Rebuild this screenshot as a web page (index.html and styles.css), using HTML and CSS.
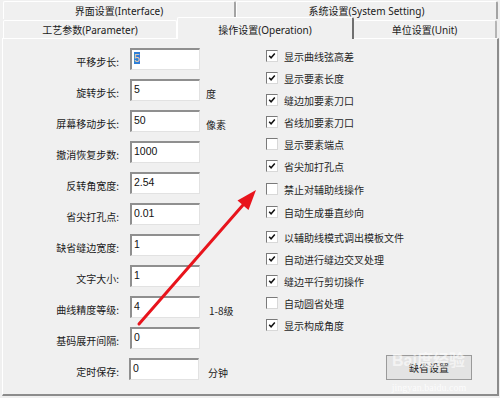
FILE: index.html
```html
<!DOCTYPE html>
<html lang="zh">

<head>
    <meta charset="UTF-8">
    <title>操作设置</title>
    <link rel="stylesheet" href="styles.css">
</head>

<body>
    <div class="window">
        <div class="tab-row top">
            <div class="tab wide">界面设置(Interface)</div>
            <div class="tab wide last">系统设置(System Setting)</div>
        </div>
        <div class="tab-row second">
            <div class="tab param">工艺参数(Parameter)</div>
            <div class="tab oper active">操作设置(Operation)</div>
            <div class="tab unit last">单位设置(Unit)</div>
        </div>

        <div class="panel">
            <div class="fields">
                <div class="row"><span class="label">平移步长:</span><div class="field"><span class="sel">5</span></div></div>
                <div class="row"><span class="label">旋转步长:</span><div class="field">5</div><span class="unit-text">度</span></div>
                <div class="row"><span class="label">屏幕移动步长:</span><div class="field">50</div><span class="unit-text">像素</span></div>
                <div class="row"><span class="label">撤消恢复步数:</span><div class="field">1000</div></div>
                <div class="row"><span class="label">反转角宽度:</span><div class="field">2.54</div></div>
                <div class="row"><span class="label">省尖打孔点:</span><div class="field">0.01</div></div>
                <div class="row"><span class="label">缺省缝边宽度:</span><div class="field">1</div></div>
                <div class="row"><span class="label">文字大小:</span><div class="field">1</div></div>
                <div class="row"><span class="label">曲线精度等级:</span><div class="field">4</div><span class="unit-text wide-unit">1-8级</span></div>
                <div class="row"><span class="label">基码展开间隔:</span><div class="field">0</div></div>
                <div class="row"><span class="label">定时保存:</span><div class="field shift">0</div><span class="unit-text wide-unit">分钟</span></div>
            </div>

            <div class="options">
                <div class="check on">显示曲线弦高差</div>
                <div class="check on">显示要素长度</div>
                <div class="check on">缝边加要素刀口</div>
                <div class="check on">省线加要素刀口</div>
                <div class="check">显示要素端点</div>
                <div class="check on">省尖加打孔点</div>
                <div class="check gap1">禁止对辅助线操作</div>
                <div class="check on gap1">自动生成垂直纱向</div>
                <div class="check on gap3">以辅助线模式调出模板文件</div>
                <div class="check on">自动进行缝边交叉处理</div>
                <div class="check on">缝边平行剪切操作</div>
                <div class="check">自动圆省处理</div>
                <div class="check on">显示构成角度</div>
                <button class="btn">缺省设置</button>
                <span class="wm-small">jingyan.baidu.com</span>
            </div>
        </div>

        <span class="wm-big">Bai度经验</span>

        <svg class="arrow" width="500" height="398" viewBox="0 0 500 398">
            <line x1="139" y1="324" x2="243" y2="205" stroke="#e8141c" stroke-width="3" stroke-linecap="round" />
            <polygon points="256,190 248.5,210 237.5,200.5" fill="#e8141c" />
        </svg>
    </div>
</body>

</html>
```

FILE: styles.css
```css
* {
    box-sizing: border-box;
}

body {
    margin: 0;
    background: #f0f0f0;
    font-family: "Noto Sans", "Noto Sans CJK SC", sans-serif;
    font-size: 10px;
    color: #1a1a1a;
}

.window {
    width: 500px;
    height: 398px;
    position: relative;
    overflow: hidden;
}

/* tabs */
.tab-row {
    display: flex;
    padding: 0 2px 0 3px;
}

.tab-row.top {
    height: 19px;
    padding-top: 1px;
}

.tab-row.second {
    height: 19px;
}

.tab {
    display: flex;
    align-items: center;
    justify-content: center;
    border-top: 1px solid #fff;
    border-left: 1px solid #fff;
    border-right: 2px solid #a3a3a3;
    border-radius: 2px 2px 0 0;
    white-space: nowrap;
}

.tab.wide {
    width: 233px;
    height: 18px;
}

.tab.wide.last {
    width: 262px;
}

.second .tab {
    height: 18px;
    margin-top: 1px;
}

.tab.param {
    width: 174px;
    border-right: 1px solid #fff;
}

.tab.oper {
    width: 177px;
}

.tab.unit {
    width: 143px;
    border-left: none;
    border-right: 2px solid #b5b5b5;
}

.tab.active {
    height: 22px;
    margin-top: -2px;
    padding-top: 1px;
    background: #f0f0f0;
    position: relative;
    z-index: 2;
    border-right: 2px solid #707070;
}

/* panel */
.panel {
    margin-left: 2px;
    width: 497px;
    height: 358px;
    border-top: 1px solid #fff;
    border-left: 1px solid #fff;
    border-right: 2px solid #8c8c8c;
    border-bottom: 2px solid #8c8c8c;
    display: grid;
    grid-template-columns: 263px 1fr;
}

.fields {
    display: flex;
    flex-direction: column;
    gap: 9px;
    padding-top: 9px;
}

.row {
    display: flex;
    align-items: center;
    height: 22px;
}

.label {
    width: 116px;
    text-align: right;
    padding-top: 4px;
    font-family: "Noto Sans CJK SC", sans-serif;
}

.field {
    width: 70px;
    height: 22px;
    margin-left: 11px;
    background: #fff;
    border-top: 2px solid #8f8f8f;
    border-left: 2px solid #8f8f8f;
    border-right: 1px solid #e2e2e2;
    border-bottom: 1px solid #e2e2e2;
    padding: 1px 2px;
    font-family: "Liberation Sans", sans-serif;
    font-size: 10.5px;
    line-height: 14px;
    color: #111;
}

.field.shift {
    margin-left: 10px;
}

.sel {
    background: #2f7fd8;
    color: #f3d3a8;
}

.unit-text {
    margin-left: 6px;
    padding-top: 6px;
    font-family: "Noto Sans CJK SC", sans-serif;
}

.unit-text.wide-unit {
    margin-left: 9px;
}

/* options */
.options {
    display: flex;
    flex-direction: column;
    gap: 8px;
    padding-top: 10px;
}

.check {
    display: flex;
    align-items: center;
    height: 14px;
    font-family: "Noto Sans CJK SC", sans-serif;
    color: #262626;
}

.check::before {
    content: "";
    width: 10px;
    height: 10px;
    margin-right: 6px;
    flex-shrink: 0;
    background: #fff;
    border-top: 1px solid #7a7a7a;
    border-left: 1px solid #7a7a7a;
    border-right: 1px solid #d8d8d8;
    border-bottom: 1px solid #d8d8d8;
}

.check.on::before {
    background: #fff url("data:image/svg+xml,%3Csvg xmlns='http://www.w3.org/2000/svg' viewBox='0 0 8 8'%3E%3Cpath d='M1.2 3.8 L3.1 5.8 L6.8 1.6' fill='none' stroke='%23111' stroke-width='1.5'/%3E%3C/svg%3E") center / 8px 8px no-repeat;
}

.check.gap1 {
    margin-top: 1px;
}

.check.gap3 {
    margin-top: 3px;
}

.btn {
    width: 86px;
    height: 25px;
    margin: 15px 0 0 120px;
    background: #e3e3e3;
    border: 1px solid #9a9a9a;
    font-family: "Noto Sans CJK SC", sans-serif;
    font-size: 10px;
    color: #222;
}

/* watermark */
.wm-small {
    margin: -6px 0 0 120px;
    width: 86px;
    text-align: center;
    font-family: "Liberation Serif", serif;
    font-size: 10px;
    line-height: 12px;
    color: rgba(255, 255, 255, 0.8);
}

.wm-big {
    position: absolute;
    left: 392px;
    top: 352px;
    font-family: "Liberation Sans", "Noto Sans CJK SC", sans-serif;
    font-size: 16px;
    font-weight: bold;
    line-height: 18px;
    color: rgba(255, 255, 255, 0.6);
    pointer-events: none;
}

.arrow {
    position: absolute;
    left: 0;
    top: 0;
    pointer-events: none;
}
```
